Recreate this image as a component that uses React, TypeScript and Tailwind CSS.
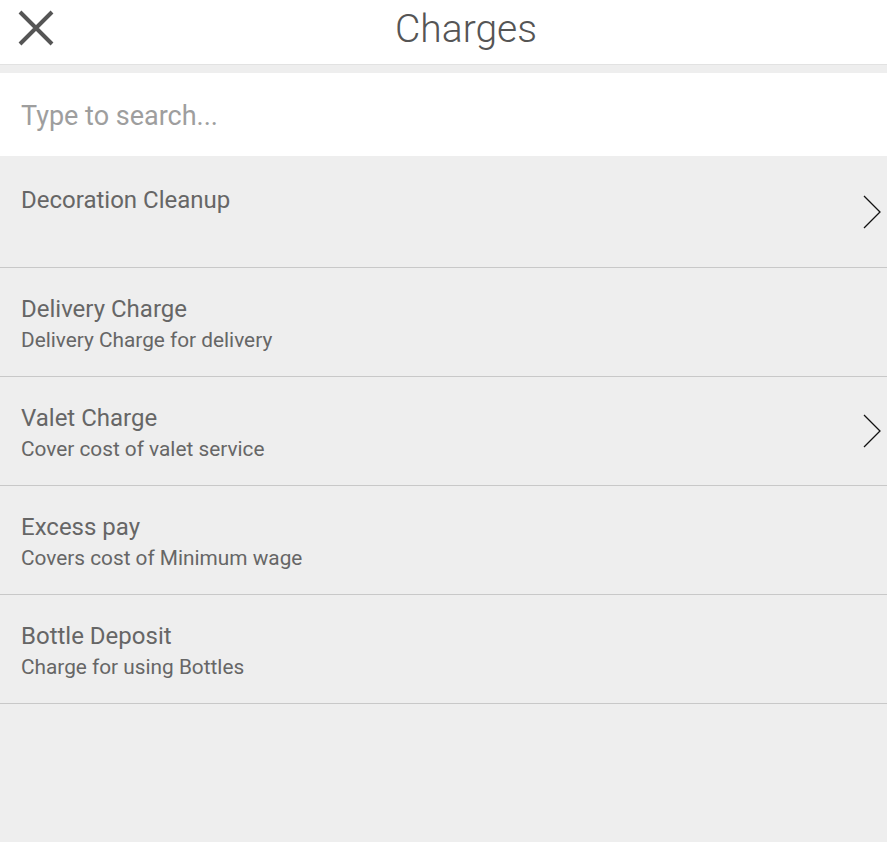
import { useState } from "react";

interface Charge {
  name: string;
  description: string;
  hasChildren: boolean;
}

const charges: Charge[] = [
  { name: "Decoration Cleanup", description: "", hasChildren: true },
  { name: "Delivery Charge", description: "Delivery Charge for delivery", hasChildren: false },
  { name: "Valet Charge", description: "Cover cost of valet service", hasChildren: true },
  { name: "Excess pay", description: "Covers cost of Minimum wage", hasChildren: false },
  { name: "Bottle Deposit", description: "Charge for using Bottles", hasChildren: false },
];

export default function App() {
  const [query, setQuery] = useState("");

  const shown = charges.filter((c) => c.name.toLowerCase().includes(query.toLowerCase()));

  return (
    <div className="h-[842px] w-full bg-[#eeeeee] flex flex-col" style={{ fontFamily: "Roboto, 'Noto Sans', sans-serif" }}>
      <div className="h-[65px] bg-white border-b border-[#e2e2e2] relative flex items-center justify-center shrink-0">
        <button className="absolute left-[18px] top-[10px] w-[36px] h-[36px] text-[#555]">
          <svg viewBox="0 0 36 36" className="w-[36px] h-[36px]" fill="none" stroke="currentColor" strokeWidth={4}>
            <path d="M2 2L34 34M34 2L2 34" />
          </svg>
        </button>
        <h1 className="ml-[45px] text-[39px] font-light text-[#555] leading-none -mt-[5px]">Charges</h1>
      </div>

      <div className="h-[8px] shrink-0" />

      <div className="h-[83px] bg-white flex items-center px-[21px] shrink-0">
        <input
          value={query}
          onChange={(e) => setQuery(e.target.value)}
          placeholder="Type to search..."
          className="w-full bg-transparent outline-none text-[27px] text-[#555] placeholder:text-[#9e9e9e] pt-[3px]"
        />
      </div>

      <div className="flex flex-col">
        {shown.map((c, i) => (
          <div
            key={c.name}
            className={`relative border-b border-[#c8c8c8] px-[21px] ${i === 0 ? "h-[112px] pt-[30px]" : "h-[109px] pt-[27px]"}`}
          >
            <div className="text-[24px] leading-[28px] text-[#666]">{c.name}</div>
            {c.description && <div className="mt-[5px] text-[20.8px] leading-[24px] text-[#666]">{c.description}</div>}
            {c.hasChildren && (
              <svg viewBox="0 0 18 34" className="absolute right-[6px] top-1/2 -translate-y-1/2 w-[18px] h-[34px]" fill="none" stroke="#111" strokeWidth={1.3}>
                <path d="M1 1L17 17L1 33" />
              </svg>
            )}
          </div>
        ))}
      </div>
    </div>
  );
}
